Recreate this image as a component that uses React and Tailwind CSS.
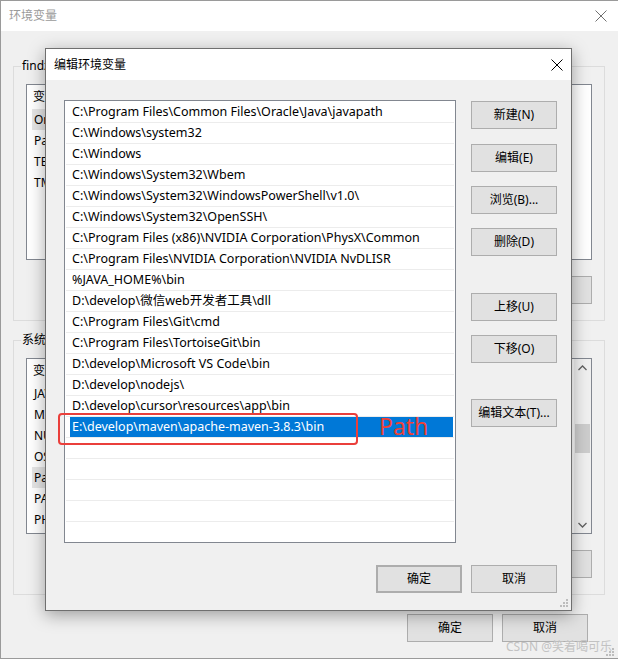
import React from "react";

const pathRows = [
  "C:\\Program Files\\Common Files\\Oracle\\Java\\javapath",
  "C:\\Windows\\system32",
  "C:\\Windows",
  "C:\\Windows\\System32\\Wbem",
  "C:\\Windows\\System32\\WindowsPowerShell\\v1.0\\",
  "C:\\Windows\\System32\\OpenSSH\\",
  "C:\\Program Files (x86)\\NVIDIA Corporation\\PhysX\\Common",
  "C:\\Program Files\\NVIDIA Corporation\\NVIDIA NvDLISR",
  "%JAVA_HOME%\\bin",
  "D:\\develop\\微信web开发者工具\\dll",
  "C:\\Program Files\\Git\\cmd",
  "C:\\Program Files\\TortoiseGit\\bin",
  "D:\\develop\\Microsoft VS Code\\bin",
  "D:\\develop\\nodejs\\",
  "D:\\develop\\cursor\\resources\\app\\bin",
  "E:\\develop\\maven\\apache-maven-3.8.3\\bin",
  "",
  "",
  "",
  "",
  "",
];

const userVars = ["OneDrive", "Path", "TEMP", "TMP"];
const sysVars = ["JAVA_HOME", "MAVEN_HOME", "NUMBER_OF_PROCESSORS", "OS", "Path", "PATHEXT", "PHP_HOME"];

function CloseX({ color }) {
  return (
    <svg width="12" height="12" viewBox="0 0 12 12">
      <path d="M0.5 0.5 L11.5 11.5 M11.5 0.5 L0.5 11.5" stroke={color} strokeWidth="1" fill="none" />
    </svg>
  );
}

function Grip() {
  return (
    <svg width="10" height="10" viewBox="0 0 10 10">
      <rect x="7" y="1" width="2" height="2" fill="#bdbdbd" />
      <rect x="4" y="4" width="2" height="2" fill="#bdbdbd" />
      <rect x="7" y="4" width="2" height="2" fill="#bdbdbd" />
      <rect x="1" y="7" width="2" height="2" fill="#bdbdbd" />
      <rect x="4" y="7" width="2" height="2" fill="#bdbdbd" />
      <rect x="7" y="7" width="2" height="2" fill="#bdbdbd" />
    </svg>
  );
}

function Btn({ children, className = "" }) {
  return (
    <div
      className={`flex h-[28px] w-[86px] shrink-0 items-center justify-center border border-[#adadad] bg-[#e1e1e1] text-[12px] leading-none text-black ${className}`}
    >
      {children}
    </div>
  );
}

function VarList({ names, selected, scroll }) {
  return (
    <div className="flex h-[176px] w-[566px] border border-[#828790] bg-white">
      <div className="flex-1 overflow-hidden">
        <div className="flex h-[24px] items-center text-[12px]">
          <div className="w-[180px] border-r border-[#e5e5e5] pl-[6px]">变量</div>
        </div>
        {names.map((n) => (
          <div key={n} className="flex h-[21px] pl-[5px]">
            <div
              className={`flex w-[520px] items-center pl-[2px] text-[12px] ${
                n === selected ? "bg-[#e5e5e5]" : ""
              }`}
            >
              {n}
            </div>
          </div>
        ))}
      </div>
      {scroll && (
        <div className="flex w-[17px] flex-col bg-[#f0f0f0]">
          <div className="flex h-[17px] items-center justify-center">
            <svg width="9" height="6" viewBox="0 0 9 6">
              <path d="M0.5 5 L4.5 1 L8.5 5" stroke="#606060" strokeWidth="1.3" fill="none" />
            </svg>
          </div>
          <div className="flex flex-1 flex-col">
            <div className="h-[48px]" />
            <div className="mx-[1px] h-[29px] bg-[#cdcdcd]" />
          </div>
          <div className="flex h-[17px] items-center justify-center">
            <svg width="9" height="6" viewBox="0 0 9 6">
              <path d="M0.5 1 L4.5 5 L8.5 1" stroke="#606060" strokeWidth="1.3" fill="none" />
            </svg>
          </div>
        </div>
      )}
    </div>
  );
}

function Group({ label, className, children }) {
  return (
    <fieldset className={`w-[592px] border border-[#dcdcdc] px-[12px] pb-[16px] pt-[10px] ${className}`}>
      <legend className="-ml-[5px] px-[1px] text-[12px] leading-[16px]">{label}</legend>
      {children}
    </fieldset>
  );
}

export default function App() {
  return (
    <div className="relative h-[659px] w-[618px] overflow-hidden bg-[#f0f0f0] font-['Noto_Sans','Noto_Sans_CJK_SC',sans-serif] text-black">
      {/* background window: 环境变量 */}
      <div className="flex h-[659px] w-[624px] flex-col border-b border-l border-t border-[#9a9a9a] bg-[#f0f0f0]">
        <div className="flex h-[30px] shrink-0 items-center justify-between bg-white pl-[8px]">
          <span className="text-[12px] text-[#9a9a9a]">环境变量</span>
          <div className="flex w-[46px] justify-center">
            <CloseX color="#707070" />
          </div>
        </div>
        <div className="pl-[12px]">
          <Group label="findz 的用户变量(U)" className="mt-[27px]">
            <VarList names={userVars} selected="OneDrive" />
            <div className="mt-[16px] flex justify-end gap-[9px]">
              <Btn>新建(N)...</Btn>
              <Btn>编辑(E)...</Btn>
              <Btn>删除(D)</Btn>
            </div>
          </Group>
          <Group label="系统变量(S)" className="mt-[11px]">
            <VarList names={sysVars} selected="Path" scroll />
            <div className="mt-[16px] flex justify-end gap-[9px]">
              <Btn>新建(W)...</Btn>
              <Btn>编辑(I)...</Btn>
              <Btn>删除(L)</Btn>
            </div>
          </Group>
          <div className="mt-[19px] flex w-[592px] justify-end gap-[9px] pr-[17px]">
            <Btn>确定</Btn>
            <Btn>取消</Btn>
          </div>
        </div>
      </div>

      {/* foreground dialog: 编辑环境变量 */}
      <div className="absolute left-[45px] top-[48px] flex h-[563px] w-[527px] flex-col border border-[#6f6f6f] bg-[#f0f0f0] shadow-[0_4px_16px_rgba(0,0,0,0.35)]">
        <div className="flex h-[31px] shrink-0 items-center justify-between bg-white pl-[8px] pr-[8px]">
          <span className="text-[12px]">编辑环境变量</span>
          <CloseX color="#000000" />
        </div>
        <div className="flex pl-[18px] pt-[20px]">
          <div className="h-[443px] w-[392px] overflow-hidden border border-[#828790] bg-white px-[1px] pt-[1px]">
            {pathRows.map((p, i) => (
              <div key={i} className="flex h-[21px] border-b border-[#ececec] pl-[4px] pr-[1px]">
                <div
                  className={`flex flex-1 items-center whitespace-nowrap pl-[2px] pt-[1px] text-[12.5px] leading-none ${
                    i === 15 ? "bg-[#0078d7] text-white" : ""
                  }`}
                >
                  {p}
                </div>
              </div>
            ))}
          </div>
          <div className="ml-[15px] flex flex-col">
            <Btn className="mt-[1px]">新建(N)</Btn>
            <Btn className="mt-[15px]">编辑(E)</Btn>
            <Btn className="mt-[14px]">浏览(B)...</Btn>
            <Btn className="mt-[14px]">删除(D)</Btn>
            <Btn className="mt-[37px]">上移(U)</Btn>
            <Btn className="mt-[14px]">下移(O)</Btn>
            <Btn className="mt-[36px]">编辑文本(T)...</Btn>
          </div>
        </div>
        <div className="mt-[22px] flex justify-end gap-[9px] pr-[14px]">
          <Btn className="border-2 border-[#0078d7]">确定</Btn>
          <Btn>取消</Btn>
        </div>
        <div className="absolute bottom-[2px] right-[2px]">
          <Grip />
        </div>
      </div>

      {/* red annotation */}
      <div className="absolute left-[58px] top-[413px] h-[32px] w-[300px] rounded-[4px] border-2 border-[#ea3f3b]" />
      <div className="absolute left-[379px] top-[410px] text-[23px] leading-[32px] text-[#ef4136]">Path</div>

      {/* bottom right grip + watermark */}
      <div className="absolute bottom-[2px] right-[3px]">
        <Grip />
      </div>
      <div className="absolute bottom-[4px] right-[6px] text-[12px] leading-[16px] text-[#c2c2c2]">
        CSDN @笑着喝可乐
      </div>
    </div>
  );
}
